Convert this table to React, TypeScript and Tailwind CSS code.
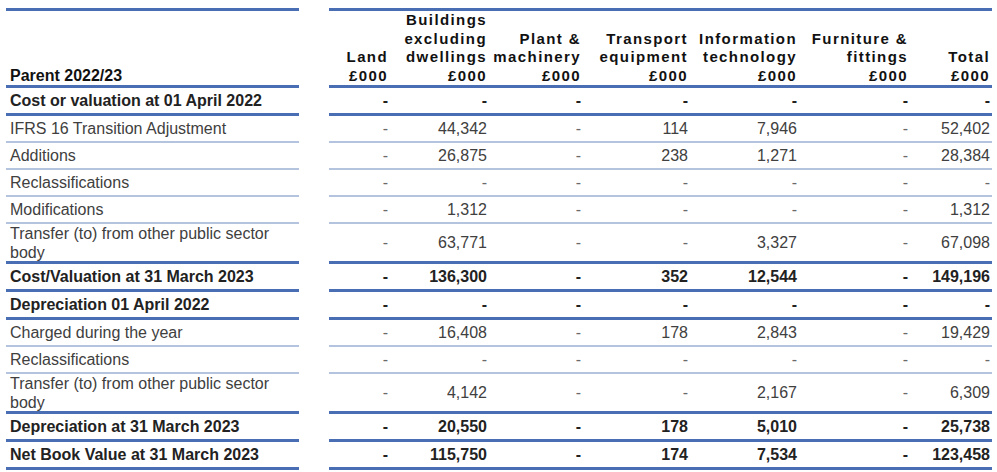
import React from 'react';

type Row = {
  label: React.ReactNode;
  values: string[];
  bold?: boolean;
  line: 'thick' | 'light';
  tall?: boolean;
};

const all = (v: string) => [v, v, v, v, v, v, v];

const rows: Row[] = [
  { label: 'Cost or valuation at 01 April 2022', values: all('-'), bold: true, line: 'thick' },
  { label: 'IFRS 16 Transition Adjustment', values: ['-', '44,342', '-', '114', '7,946', '-', '52,402'], line: 'light' },
  { label: 'Additions', values: ['-', '26,875', '-', '238', '1,271', '-', '28,384'], line: 'light' },
  { label: 'Reclassifications', values: all('-'), line: 'light' },
  { label: 'Modifications', values: ['-', '1,312', '-', '-', '-', '-', '1,312'], line: 'light' },
  {
    label: (
      <>
        Transfer (to) from other public sector
        <br />
        body
      </>
    ),
    values: ['-', '63,771', '-', '-', '3,327', '-', '67,098'],
    line: 'thick',
    tall: true,
  },
  { label: 'Cost/Valuation at 31 March 2023', values: ['-', '136,300', '-', '352', '12,544', '-', '149,196'], bold: true, line: 'thick' },
  { label: 'Depreciation 01 April 2022', values: all('-'), bold: true, line: 'thick' },
  { label: 'Charged during the year', values: ['-', '16,408', '-', '178', '2,843', '-', '19,429'], line: 'light' },
  { label: 'Reclassifications', values: all('-'), line: 'light' },
  {
    label: (
      <>
        Transfer (to) from other public sector
        <br />
        body
      </>
    ),
    values: ['-', '4,142', '-', '-', '2,167', '-', '6,309'],
    line: 'thick',
    tall: true,
  },
  { label: 'Depreciation at 31 March 2023', values: ['-', '20,550', '-', '178', '5,010', '-', '25,738'], bold: true, line: 'thick' },
  { label: 'Net Book Value at 31 March 2023', values: ['-', '115,750', '-', '174', '7,534', '-', '123,458'], bold: true, line: 'thick' },
];

// widths of the seven money columns, left to right
const colWidths = ['w-[59px]', 'w-[99px]', 'w-[94px]', 'w-[107px]', 'w-[109px]', 'w-[111px]', 'w-[82px]'];

const headers: React.ReactNode[] = [
  <>Land<br />£000</>,
  <>Buildings<br />excluding<br />dwellings<br />£000</>,
  <>Plant &amp;<br />machinery<br />£000</>,
  <>Transport<br />equipment<br />£000</>,
  <>Information<br />technology<br />£000</>,
  <>Furniture &amp;<br />fittings<br />£000</>,
  <>Total<br />£000</>,
];

const App = () => {
  return (
    <div className="w-[997px] h-[472px] bg-white pt-[8px] pl-[6px] font-['Liberation_Sans',Arial,sans-serif]">
      {/* header */}
      <div className="flex">
        <div className="w-[293px] border-t-[3px] border-b-[3px] border-[#4a6eb4] h-[80px] flex items-end px-[4px]">
          <span className="text-[16px] font-bold leading-[18.5px] text-[#111]">Parent 2022/23</span>
        </div>
        <div className="w-[30px]" />
        <div className="w-[663px] border-t-[3px] border-b-[3px] border-[#4a6eb4] h-[80px] flex items-end pr-[1px]">
          {headers.map((h, i) => (
            <div
              key={i}
              className={`${colWidths[i]} text-right text-[15px] font-bold leading-[18.5px] tracking-[1.4px] text-[#111]`}
            >
              {h}
            </div>
          ))}
        </div>
      </div>

      {rows.map((row, r) => {
        const border =
          row.line === 'thick' ? 'border-b-[3px] border-[#4a6eb4]' : 'border-b-2 border-[#b4c4de]';
        const height = row.tall
          ? row.line === 'thick'
            ? 'h-[40px]'
            : 'h-[39px]'
          : row.line === 'thick'
            ? 'h-[28px]'
            : 'h-[27px]';
        const text = row.bold ? 'font-bold text-[#222]' : 'text-[#404040]';
        return (
          <div key={r} className="flex text-[16px]">
            <div className={`w-[293px] ${height} ${border} flex items-center px-[4px] ${text}`}>
              <span className={row.tall ? 'leading-[19px]' : 'leading-none'}>{row.label}</span>
            </div>
            <div className="w-[30px]" />
            <div className={`w-[663px] ${height} ${border} flex items-center pr-[2px] ${text}`}>
              {row.values.map((v, i) => (
                <div
                  key={i}
                  className={`${colWidths[i]} text-right leading-none ${v === '-' ? (row.bold ? '' : 'text-[#6a6a6a]') : ''}`}
                >
                  {v}
                </div>
              ))}
            </div>
          </div>
        );
      })}
    </div>
  );
};

export default App;
